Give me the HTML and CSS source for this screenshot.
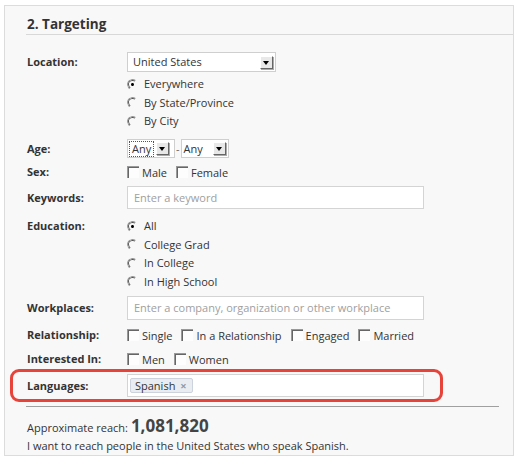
FILE: index.html
```html
<!DOCTYPE html>
<html lang="en">
<head>
    <meta charset="UTF-8">
    <title>Targeting</title>
    <link rel="stylesheet" href="styles.css">
</head>
<body>
    <div class="panel">
        <h2 class="panel-title">2. Targeting</h2>

        <div class="form">
            <div class="row row-location">
                <div class="label label-select">Location:</div>
                <div class="field">
                    <div class="select select-wide">
                        <span class="select-value">United States</span>
                        <span class="select-btn"></span>
                    </div>
                    <ul class="options">
                        <li><span class="radio checked"></span>Everywhere</li>
                        <li><span class="radio"></span>By State/Province</li>
                        <li><span class="radio"></span>By City</li>
                    </ul>
                </div>
            </div>

            <div class="row row-age">
                <div class="label label-small">Age:</div>
                <div class="field field-inline">
                    <div class="select select-small">
                        <span class="select-value focused">Any</span>
                        <span class="select-btn"></span>
                    </div>
                    <span class="dash">-</span>
                    <div class="select select-small">
                        <span class="select-value">Any</span>
                        <span class="select-btn"></span>
                    </div>
                </div>
            </div>

            <div class="row row-sex">
                <div class="label label-check">Sex:</div>
                <div class="field field-inline">
                    <label class="check"><span class="box"></span>Male</label>
                    <label class="check"><span class="box"></span>Female</label>
                </div>
            </div>

            <div class="row row-keywords">
                <div class="label label-input">Keywords:</div>
                <div class="field">
                    <div class="text-input placeholder">Enter a keyword</div>
                </div>
            </div>

            <div class="row row-education">
                <div class="label label-radio">Education:</div>
                <div class="field">
                    <ul class="options">
                        <li><span class="radio checked"></span>All</li>
                        <li><span class="radio"></span>College Grad</li>
                        <li><span class="radio"></span>In College</li>
                        <li><span class="radio"></span>In High School</li>
                    </ul>
                </div>
            </div>

            <div class="row row-workplaces">
                <div class="label label-input">Workplaces:</div>
                <div class="field">
                    <div class="text-input placeholder">Enter a company, organization or other workplace</div>
                </div>
            </div>

            <div class="row row-relationship">
                <div class="label label-check">Relationship:</div>
                <div class="field field-inline">
                    <label class="check"><span class="box"></span>Single</label>
                    <label class="check"><span class="box"></span>In a Relationship</label>
                    <label class="check"><span class="box"></span>Engaged</label>
                    <label class="check"><span class="box"></span>Married</label>
                </div>
            </div>

            <div class="row row-interested">
                <div class="label label-check">Interested In:</div>
                <div class="field field-inline">
                    <label class="check"><span class="box"></span>Men</label>
                    <label class="check"><span class="box"></span>Women</label>
                </div>
            </div>

            <div class="row row-languages highlight">
                <div class="label label-input">Languages:</div>
                <div class="field">
                    <div class="text-input token-input">
                        <span class="token">Spanish <span class="token-x">&times;</span></span>
                    </div>
                </div>
            </div>
        </div>

        <div class="summary">
            <div class="reach">Approximate reach: <span class="reach-num">1,081,820</span></div>
            <div class="reach-text">I want to reach people in the United States who speak Spanish.</div>
        </div>
    </div>
</body>
</html>
```

FILE: styles.css
```css
body {
    margin: 0;
    padding: 0;
    background: #fff;
    font-family: "Open Sans", "DejaVu Sans", sans-serif;
    font-size: 11px;
    color: #333;
}

.panel {
    margin: 5px 6px 4px 4px;
    background-color: #f8f8f8;
    border: 1px solid #dcdcdc;
    padding-bottom: 1px;
}

.panel-title {
    margin: 0 0 0 21px;
    padding: 9px 0 1px 1px;
    font-size: 13.5px;
    line-height: 18px;
    font-weight: bold;
    color: #333;
    border-bottom: 1px solid #d8d8d8;
}

.form {
    padding-left: 22px;
}

.row {
    display: flex;
    align-items: flex-start;
}

.label {
    width: 100px;
    flex-shrink: 0;
    font-weight: bold;
    color: #333;
}
.label-select { line-height: 20px; }
.label-small { line-height: 19px; }
.label-check { line-height: 18px; }
.label-input { line-height: 23px; }
.label-radio { line-height: 18.5px; }

.field-inline {
    display: flex;
    align-items: center;
}

.row-location { margin-top: 17px; }
.row-age { margin-top: 8.5px; }
.row-sex { margin-top: 5px; }
.row-keywords { margin-top: 5px; }
.row-education { margin-top: 8px; }
.row-workplaces { margin-top: 5px; }
.row-relationship { margin-top: 6px; }
.row-interested { margin-top: 6px; }
.row-languages { margin-top: 6px; }

/* selects */
.select {
    display: flex;
    align-items: center;
    box-sizing: border-box;
    background: #fff;
    border: 1px solid #cfcfcf;
    padding: 0 2px 0 5px;
}
.select-wide {
    width: 149px;
    height: 20px;
}
.select-small {
    width: 48px;
    height: 19px;
    padding-left: 2px;
}
.select-value {
    flex: 1;
    line-height: 14px;
}
.select-value.focused {
    flex: 0 0 auto;
    outline: 1px dotted #555;
    padding: 0 2px;
    margin-right: 3px;
}
.select-btn {
    position: relative;
    width: 13px;
    height: 13px;
    box-sizing: border-box;
    background: #e8e8e8;
    border-top: 1px solid #fff;
    border-left: 1px solid #fff;
    border-right: 1px solid #666;
    border-bottom: 1px solid #666;
    box-shadow: 1px 1px 0 #aaa;
}
.select-btn::after {
    content: "";
    position: absolute;
    left: 2px;
    top: 4px;
    border-left: 3.5px solid transparent;
    border-right: 3.5px solid transparent;
    border-top: 4px solid #000;
}
.dash {
    margin: 0 1px;
    color: #666;
}

/* radios */
.options {
    list-style: none;
    margin: 3px 0 0;
    padding: 0;
}
.row-education .options { margin-top: 0; }
.options li {
    display: flex;
    align-items: center;
    line-height: 18.5px;
    height: 18.5px;
}
.radio {
    position: relative;
    width: 11px;
    height: 11px;
    box-sizing: border-box;
    border-radius: 50%;
    border: 1px solid transparent;
    border-top-color: #999;
    border-left-color: #999;
    margin-right: 6px;
    transform: rotate(-10deg);
}
.radio::before {
    content: "";
    position: absolute;
    inset: 0;
    border-radius: 50%;
    border: 1px solid transparent;
    border-top-color: #555;
    border-left-color: #555;
}
.radio.checked::after {
    content: "";
    position: absolute;
    left: 3px;
    top: 3px;
    width: 3px;
    height: 3px;
    border-radius: 50%;
    background: #000;
}

/* checkboxes */
.check {
    display: flex;
    align-items: center;
    height: 18px;
    margin-right: 9px;
}
.box {
    width: 12px;
    height: 12px;
    box-sizing: border-box;
    border-top: 1px solid #999;
    border-left: 1px solid #999;
    box-shadow: inset 1px 1px 0 #666;
    background: #fdfdfd;
    margin-right: 3px;
}

/* text inputs */
.text-input {
    width: 297px;
    height: 23px;
    box-sizing: border-box;
    background: #fff;
    border: 1px solid #d4d4d4;
    padding: 0 6px;
    line-height: 21px;
}
.placeholder {
    color: #a0a0a0;
}
.row-workplaces .text-input {
    height: 24px;
    line-height: 22px;
}
.token-input {
    padding: 3px 2px;
    line-height: 15px;
}
.token {
    display: inline-block;
    height: 15px;
    box-sizing: border-box;
    padding: 0 5px 0 4px;
    background: #e9ecf1;
    border: 1px solid #cdd3dc;
    border-radius: 2px;
    line-height: 13px;
    color: #333;
}
.token-x {
    color: #8d99aa;
    font-weight: bold;
    margin-left: 2px;
}

.highlight {
    position: relative;
}
.highlight::before {
    content: "";
    position: absolute;
    left: -17px;
    top: -5px;
    width: 433px;
    height: 33px;
    box-sizing: border-box;
    border: 3px solid #e8433a;
    border-radius: 9px;
}

/* summary */
.summary {
    margin: 9px 0 0 21px;
    width: 472px;
    border-top: 1px solid #a0a0a0;
    padding-left: 1px;
}
.reach {
    margin-top: 9px;
    line-height: 20px;
    font-size: 11px;
}
.reach-num {
    font-size: 17px;
    font-weight: bold;
    color: #444;
}
.reach-text {
    line-height: 16px;
}
```
